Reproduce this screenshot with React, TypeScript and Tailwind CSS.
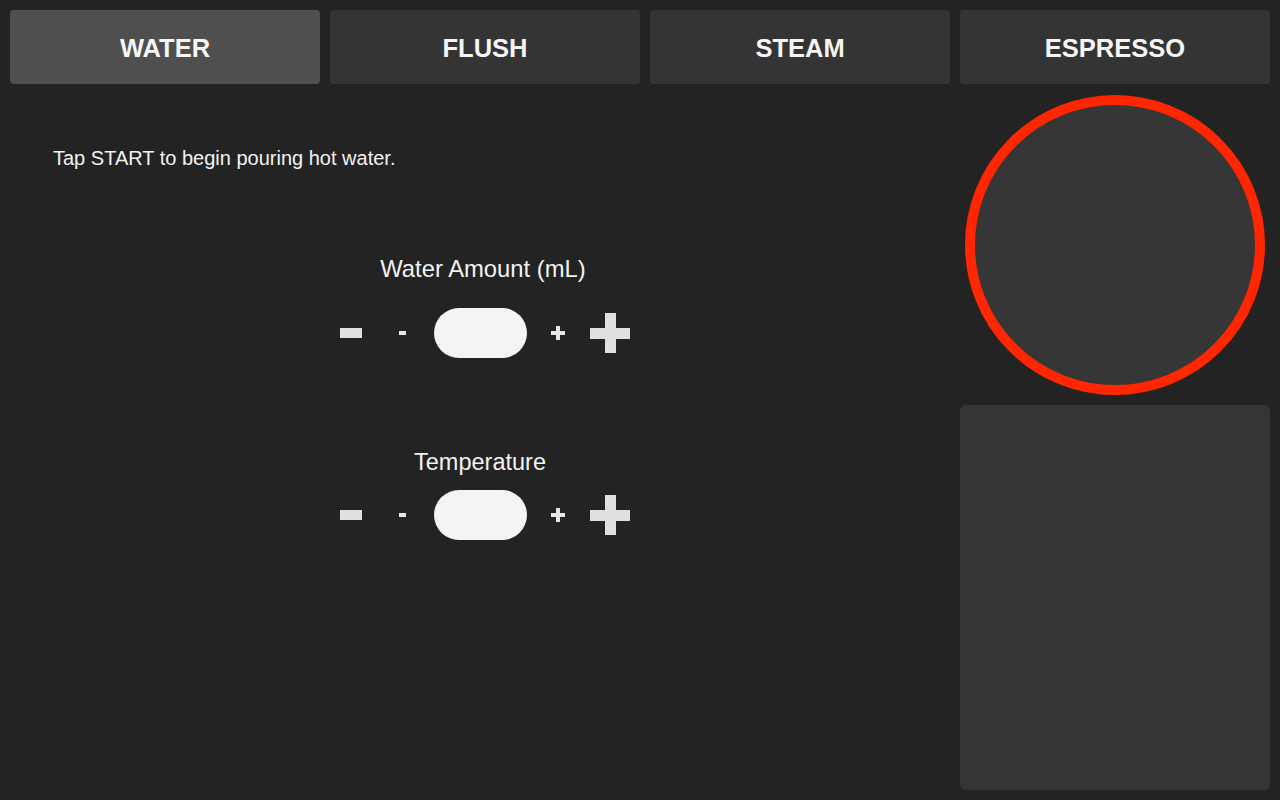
import React from "react";

const font = { fontFamily: '"Liberation Sans", Arial, Helvetica, sans-serif' };

function Tab({ label, active, w }: { label: string; active?: boolean; w: string }) {
  return (
    <div
      className={`${w} h-[74px] shrink-0 rounded-[4px] flex items-center justify-center ${
        active ? "bg-[#4f4f4f]" : "bg-[#343434]"
      }`}
    >
      <span className="mt-[4px] text-[25.5px] font-bold text-[#f5f5f5] leading-none">{label}</span>
    </div>
  );
}

function BigMinus() {
  return (
    <div className="w-[40px] h-[40px] flex items-center justify-center">
      <div className="w-[22px] h-[10px] bg-[#e0e0e0]" />
    </div>
  );
}

function SmallMinus() {
  return (
    <div className="w-[23px] h-[23px] flex items-center justify-center">
      <div className="w-[7px] h-[4px] bg-[#e6e6e6]" />
    </div>
  );
}

function SmallPlus() {
  return (
    <div className="w-[23px] h-[23px] flex items-center justify-center">
      <div className="relative w-[14px] h-[14px]">
        <div className="absolute left-0 top-[5px] w-[14px] h-[4px] bg-[#e6e6e6]" />
        <div className="absolute left-[5px] top-0 w-[4px] h-[14px] bg-[#e6e6e6]" />
      </div>
    </div>
  );
}

function BigPlus() {
  return (
    <div className="w-[40px] h-[40px] flex items-center justify-center">
      <div className="relative w-[40px] h-[40px]">
        <div className="absolute left-0 top-[15px] w-[40px] h-[11px] bg-[#e0e0e0]" />
        <div className="absolute left-[15px] top-0 w-[11px] h-[40px] bg-[#e0e0e0]" />
      </div>
    </div>
  );
}

function Control() {
  return (
    <div className="flex items-center justify-center gap-5">
      <BigMinus />
      <SmallMinus />
      <div className="w-[93px] h-[50px] rounded-full bg-[#f4f4f4]" />
      <SmallPlus />
      <BigPlus />
    </div>
  );
}

export default function App() {
  return (
    <div className="w-[1280px] h-[800px] bg-[#232323] p-[10px] flex flex-col overflow-hidden" style={font}>
      <div className="flex gap-[10px]">
        <Tab label="WATER" active w="w-[310px]" />
        <Tab label="FLUSH" w="w-[310px]" />
        <Tab label="STEAM" w="w-[300px]" />
        <Tab label="ESPRESSO" w="w-[310px]" />
      </div>
      <div className="flex-1 flex gap-[10px] mt-[11px] min-h-0">
        <div className="flex-1 flex flex-col">
          <p className="mt-[53px] pl-[43px] text-[20px] leading-none text-[#f2f2f2]">
            Tap START to begin pouring hot water.
          </p>
          <div className="mt-[89px] pl-[6px] text-center text-[23.8px] leading-none text-[#f2f2f2]">
            Water Amount (mL)
          </div>
          <div className="mt-[27.5px]">
            <Control />
          </div>
          <div className="mt-[93px] text-center text-[23.5px] leading-none text-[#f2f2f2]">Temperature</div>
          <div className="mt-[15.5px]">
            <Control />
          </div>
        </div>
        <div className="w-[310px] flex flex-col gap-[10px]">
          <div className="flex justify-center">
            <div className="w-[300px] h-[300px] rounded-full border-[10px] border-[#ff2600] bg-[#363636]" />
          </div>
          <div className="flex-1 rounded-[6px] bg-[#353535]" />
        </div>
      </div>
    </div>
  );
}
